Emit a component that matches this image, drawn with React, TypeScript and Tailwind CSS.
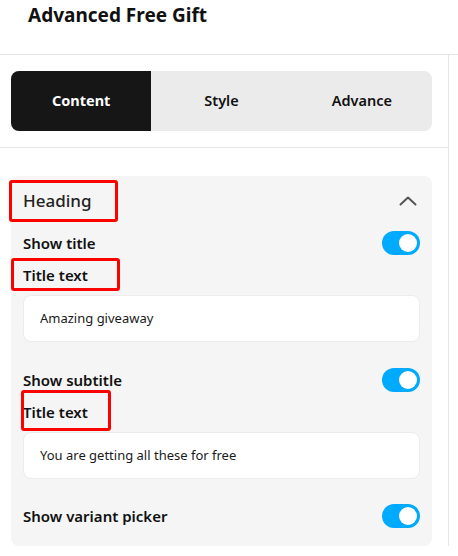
import { useState } from "react";

function Toggle({ on }: { on: boolean }) {
  return (
    <div
      className={`flex h-[24px] w-[38px] items-center rounded-full px-[3px] ${
        on ? "justify-end bg-[#00aaff]" : "justify-start bg-[#cccccc]"
      }`}
    >
      <div className="h-[18px] w-[18px] rounded-full bg-white" />
    </div>
  );
}

// red annotation frame drawn over a label
function Marked({
  children,
  box,
}: {
  children: React.ReactNode;
  box: string;
}) {
  return (
    <span className="relative inline-block">
      {children}
      <span className={`pointer-events-none absolute rounded-[3px] border-[3px] border-[#ff0000] ${box}`} />
    </span>
  );
}

function SwitchRow({ label }: { label: string }) {
  return (
    <div className="flex h-[24px] items-center justify-between">
      <span className="text-[15px] font-semibold text-[#111]">{label}</span>
      <Toggle on />
    </div>
  );
}

function TextInput({ value }: { value: string }) {
  return (
    <div className="flex h-[47px] items-center rounded-[8px] border border-[#ececec] bg-white pl-4 text-[13px] text-[#1a1a1a]">
      {value}
    </div>
  );
}

export default function App() {
  const [tab, setTab] = useState("Content");
  const tabs = ["Content", "Style", "Advance"];

  return (
    <div className="h-[556px] w-[458px] overflow-hidden bg-white font-['Noto_Sans','Open_Sans',sans-serif] text-[#111]">
      {/* header */}
      <div className="h-[55px] border-b border-[#e6e6e6] px-[28px] pt-[1px]">
        <h1 className="text-[19px] font-bold leading-[28px] text-[#111]">Advanced Free Gift</h1>
      </div>

      <div className="flex">
        <div className="w-[449px] border-r border-[#e6e6e6]">
          {/* tabs */}
          <div className="border-b border-[#e6e6e6] pb-[16px] pl-[11px] pr-[16px] pt-[16px]">
            <div className="flex h-[60px] w-[421px] overflow-hidden rounded-[8px] bg-[#ebebeb]">
              {tabs.map((t) => (
                <button
                  key={t}
                  onClick={() => setTab(t)}
                  className={`flex w-[140px] flex-1 items-center justify-center text-[14.5px] ${
                    tab === t ? "bg-[#161616] font-bold text-white" : "font-semibold text-[#111]"
                  }`}
                >
                  {t}
                </button>
              ))}
            </div>
          </div>

          {/* heading section */}
          <div className="pl-[11px] pr-[16px] pt-[28px]">
            <div className="rounded-[8px] bg-[#f5f5f5] px-[12px] pb-[18px] pt-[13px]">
              <div className="flex h-[24px] items-center justify-between">
                <Marked box="-left-[14px] -right-[26px] -top-[9px] -bottom-[9px]">
                  <span className="text-[17px] font-medium leading-[24px] text-[#222]">Heading</span>
                </Marked>
                <svg width="18" height="10" viewBox="0 0 18 10" className="mr-[3px]">
                  <path d="M1.5 8.5 L9 1.5 L16.5 8.5" fill="none" stroke="#555" strokeWidth="2" strokeLinecap="round" strokeLinejoin="round" />
                </svg>
              </div>

              <div className="mt-[18px]">
                <SwitchRow label="Show title" />
              </div>
              <div className="mt-[8px] h-[20px]">
                <Marked box="-left-[12px] -right-[32px] -top-[5px] -bottom-[4px]">
                  <span className="text-[15px] font-semibold leading-[20px]">Title text</span>
                </Marked>
              </div>
              <div className="mt-[12px]">
                <TextInput value="Amazing giveaway" />
              </div>

              <div className="mt-[26px]">
                <SwitchRow label="Show subtitle" />
              </div>
              <div className="mt-[8px] h-[20px]">
                <Marked box="-left-[2px] -right-[23px] -top-[10px] -bottom-[7px]">
                  <span className="text-[15px] font-semibold leading-[20px]">Title text</span>
                </Marked>
              </div>
              <div className="mt-[12px]">
                <TextInput value="You are getting all these for free" />
              </div>

              <div className="mt-[25px]">
                <SwitchRow label="Show variant picker" />
              </div>
            </div>
          </div>
        </div>
      </div>
    </div>
  );
}
